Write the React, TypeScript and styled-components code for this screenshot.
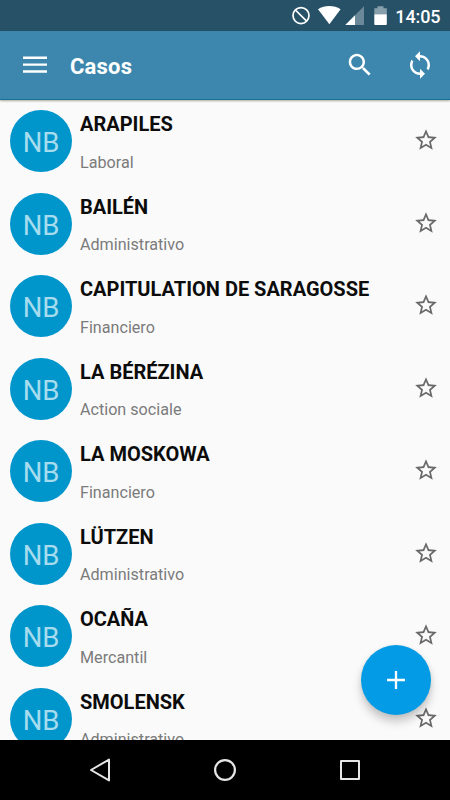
import React from "react";
import styled, { createGlobalStyle } from "styled-components";

const GlobalStyle = createGlobalStyle`
  * { box-sizing: border-box; }
  body { margin: 0; background: #fafafa; font-family: Roboto, sans-serif; }
  button { border: 0; padding: 0; background: none; font: inherit; }
`;

const Screen = styled.div`
  position: relative;
  display: flex;
  flex-direction: column;
  width: 450px;
  height: 800px;
  overflow: hidden;
  background: #fafafa;
`;

const StatusBar = styled.div`
  flex: none;
  display: flex;
  align-items: center;
  height: 31px;
  padding-left: 292px;
  background: #265167;
  color: #fff;
  svg { display: block; flex: none; }
`;

const Clock = styled.span`
  margin-left: 7.3px;
  padding-top: 2px;
  font-size: 18px;
  line-height: 24px;
  font-weight: 500;
  letter-spacing: -0.1px;
`;

const Toolbar = styled.header`
  position: relative;
  z-index: 1;
  flex: none;
  display: flex;
  align-items: center;
  height: 69px;
  padding: 0 15px 0 20px;
  background: #3d87ae;
  border-bottom: 1px solid #137595;
  box-shadow: 0 1px 2px rgba(60, 40, 20, 0.4);
  color: #fff;
`;

const Title = styled.h1`
  flex: 1;
  margin: 4px 0 0 20px;
  font-size: 22px;
  line-height: 28px;
  font-weight: 700;
  letter-spacing: 0.2px;
`;

const IconButton = styled.button<{ $gap?: number }>`
  flex: none;
  width: 30px;
  height: 30px;
  margin-left: ${(p) => p.$gap ?? 0}px;
  color: inherit;
  svg { display: block; }
`;

const List = styled.ul`
  flex: 1;
  min-height: 0;
  overflow: hidden;
  list-style: none;
  margin: 0;
  padding: 0;
`;

const Row = styled.li`
  display: flex;
  height: 82.5px;
  padding: 10px 9px 0 10px;
`;

const Avatar = styled.div`
  flex: none;
  width: 62.2px;
  height: 62.2px;
  border-radius: 50%;
  background: #0096cc;
  color: #a6dcee;
  font-size: 27.5px;
  line-height: 65px;
  text-align: center;
`;

const Details = styled.div`
  flex: 1;
  min-width: 0;
  margin-left: 7.8px;
`;

const CaseName = styled.div`
  height: 28px;
  font-size: 20px;
  line-height: 29px;
  font-weight: 700;
  color: #0c0c0c;
  white-space: nowrap;
`;

const Category = styled.div`
  margin-top: 12.7px;
  font-size: 16.15px;
  line-height: 24px;
  color: #7b7b7b;
`;

const StarButton = styled.button`
  flex: none;
  width: 30px;
  height: 30px;
  margin-top: 15px;
  color: #696969;
  svg { display: block; margin: auto; }
`;

const AddButton = styled.button`
  position: absolute;
  z-index: 2;
  right: 19px;
  bottom: 85px;
  display: grid;
  place-items: center;
  width: 70px;
  height: 70px;
  border-radius: 50%;
  background: #039be5;
  color: #fff;
  box-shadow: 0 7px 10px rgba(0, 0, 0, 0.2), 0 1px 5px rgba(0, 0, 0, 0.08);
`;

const NavBar = styled.nav`
  flex: none;
  display: flex;
  align-items: center;
  justify-content: center;
  gap: 95px;
  height: 60px;
  background: #000;
  color: #e6e6e6;
  svg { display: block; }
`;

const icons = {
  menu: "M2.4 5.2h19.2v1.9H2.4zM2.4 10.7h19.2v1.9H2.4zM2.4 16.2h19.2v1.9H2.4z",
  search:
    "M15.5 14h-.79l-.28-.27C15.41 12.59 16 11.11 16 9.5 16 5.91 13.09 3 9.5 3S3 5.91 3 9.5 5.91 16 9.5 16c1.61 0 3.09-.59 4.23-1.57l.27.28v.79l5 4.99L20.49 19l-4.99-5zm-6 0C7.01 14 5 11.99 5 9.5S7.01 5 9.5 5 14 7.01 14 9.5 11.99 14 9.5 14z",
  sync: "M12 4V1L8 5l4 4V6c3.31 0 6 2.69 6 6 0 1.01-.25 1.97-.7 2.8l1.46 1.46C19.54 15.03 20 13.57 20 12c0-4.42-3.58-8-8-8zm0 14c-3.31 0-6-2.69-6-6 0-1.01.25-1.97.7-2.8L5.24 7.74C4.46 8.97 4 10.43 4 12c0 4.42 3.58 8 8 8v3l4-4-4-4v3z",
  star: "M22 9.24l-7.19-.62L12 2 9.19 8.63 2 9.24l5.46 4.73L5.82 21 12 17.27 18.18 21l-1.63-7.03L22 9.24zM12 15.4l-3.76 2.27 1-4.28-3.32-2.88 4.38-.38L12 6.1l1.71 4.04 4.38.38-3.32 2.88 1 4.28L12 15.4z",
};

const Glyph = ({ name, size = 30 }: { name: keyof typeof icons; size?: number }) => (
  <svg width={size} height={size} viewBox="0 0 24 24" fill="currentColor">
    <path d={icons[name]} />
  </svg>
);

const StatusIcons = () => (
  <svg width="96" height="31" viewBox="292 0 96 31" fill="#fff">
    <circle cx="301" cy="15.6" r="8" fill="none" stroke="#fff" strokeWidth="1.7" />
    <path d="M295.4 10l11.2 11.2" stroke="#fff" strokeWidth="1.7" />
    <path d="M318 9.2c6.5-4.3 16.1-4.3 22.6 0L329.4 24.2z" />
    <path d="M364 6.3V25H345.3z" opacity=".32" />
    <path d="M355 15.3V25H345.3z" />
    <path d="M377.5 6.3h6v1.9h3.3v6h-12.5v-6h3.2z" opacity=".45" />
    <path d="M374.3 14.2h12.5V24.2a.8.8 0 0 1-.8.8h-10.9a.8.8 0 0 1-.8-.8z" />
  </svg>
);

const cases = [
  { name: "ARAPILES", category: "Laboral" },
  { name: "BAILÉN", category: "Administrativo" },
  { name: "CAPITULATION DE SARAGOSSE", category: "Financiero" },
  { name: "LA BÉRÉZINA", category: "Action sociale" },
  { name: "LA MOSKOWA", category: "Financiero" },
  { name: "LÜTZEN", category: "Administrativo" },
  { name: "OCAÑA", category: "Mercantil" },
  { name: "SMOLENSK", category: "Administrativo" },
];

export default function App() {
  return (
    <Screen>
      <GlobalStyle />
      <StatusBar>
        <StatusIcons />
        <Clock>14:05</Clock>
      </StatusBar>
      <Toolbar>
        <IconButton aria-label="Menu"><Glyph name="menu" /></IconButton>
        <Title>Casos</Title>
        <IconButton aria-label="Search"><Glyph name="search" /></IconButton>
        <IconButton aria-label="Sync" $gap={30}><Glyph name="sync" /></IconButton>
      </Toolbar>
      <List>
        {cases.map((c) => (
          <Row key={c.name}>
            <Avatar>NB</Avatar>
            <Details>
              <CaseName>{c.name}</CaseName>
              <Category>{c.category}</Category>
            </Details>
            <StarButton aria-label="Favourite"><Glyph name="star" size={26} /></StarButton>
          </Row>
        ))}
      </List>
      <NavBar>
        <svg width="30" height="30" viewBox="0 0 30 30" fill="none" stroke="currentColor" strokeWidth="2" strokeLinejoin="round">
          <path d="M6 15L24 4.6v20.8z" />
        </svg>
        <svg width="30" height="30" viewBox="0 0 30 30" fill="none" stroke="currentColor" strokeWidth="2.2">
          <circle cx="15" cy="15" r="9.9" />
        </svg>
        <svg width="30" height="30" viewBox="0 0 30 30" fill="none" stroke="currentColor" strokeWidth="2" strokeLinejoin="round">
          <path d="M6 6h18v18H6z" />
        </svg>
      </NavBar>
      <AddButton aria-label="Add">
        <svg width="30" height="30" viewBox="0 0 30 30" stroke="currentColor" strokeWidth="2.3">
          <path d="M15 6v18M6 15h18" />
        </svg>
      </AddButton>
    </Screen>
  );
}
